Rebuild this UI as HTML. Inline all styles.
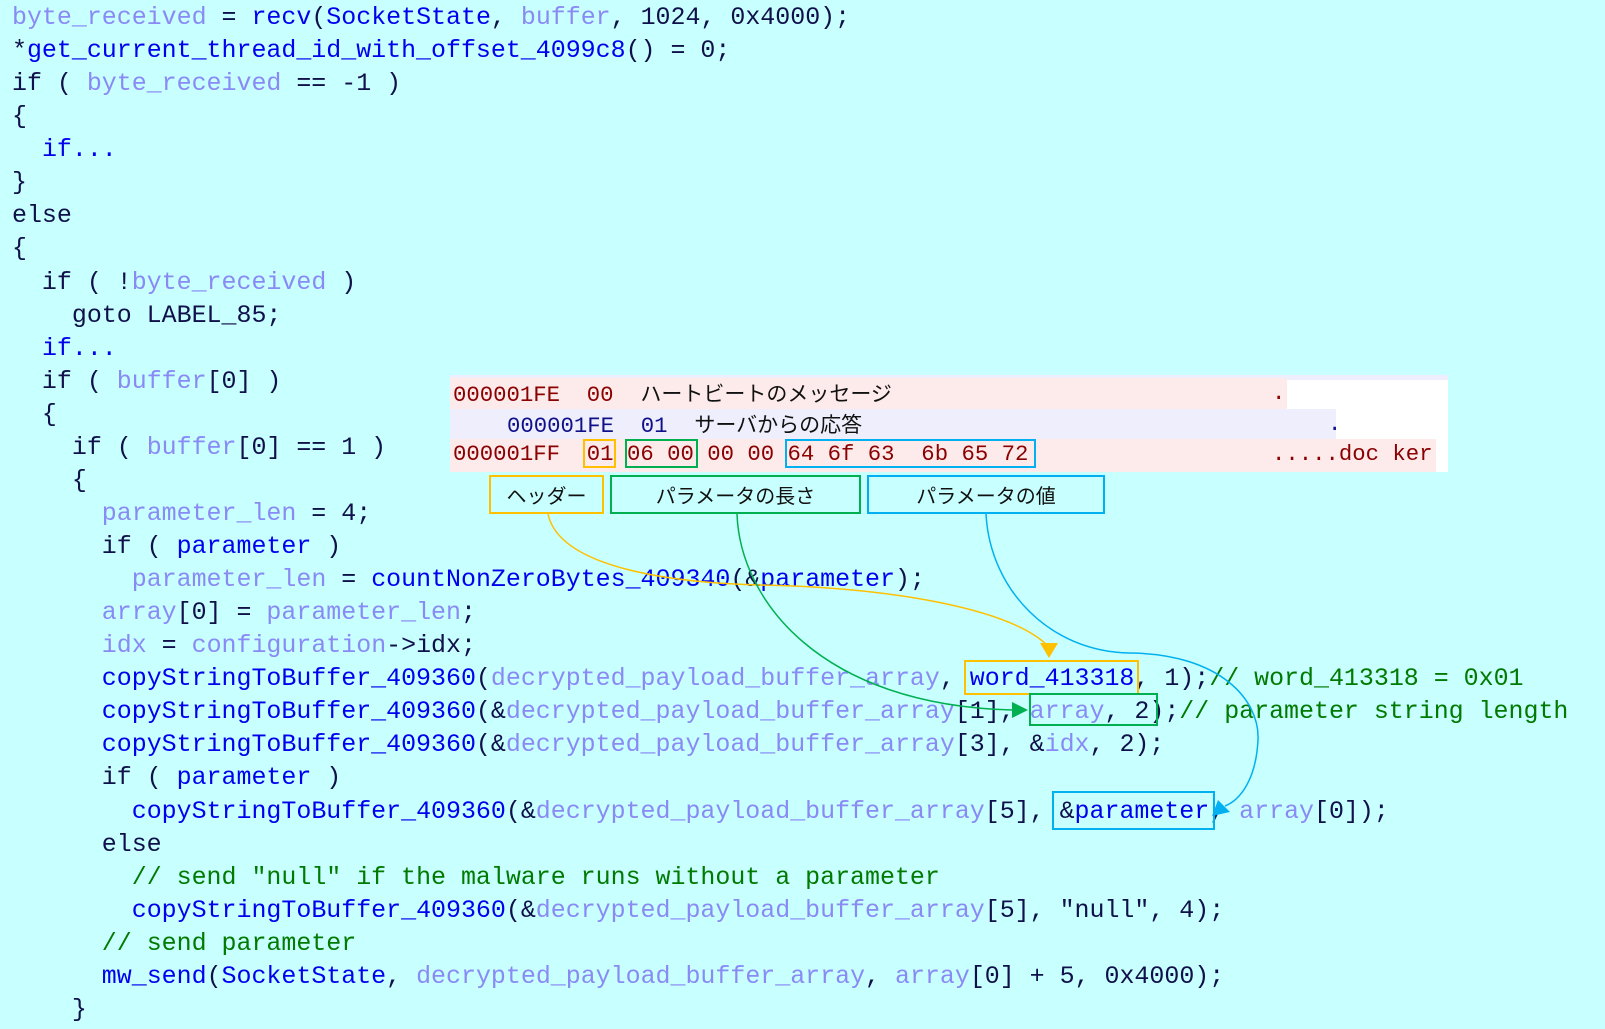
<!DOCTYPE html>
<html><head><meta charset="utf-8"><style>
html,body{margin:0;padding:0}
body{width:1605px;height:1029px;background:#c8ffff;position:relative;overflow:hidden}
pre.code{position:absolute;left:12px;top:2px;margin:0;font-family:"Liberation Mono",monospace;font-size:24.95px;line-height:33.07px;color:#10104a;white-space:pre}
.b{color:#0000ee}.v{color:#8a8af5}.g{color:#007a00}
.hex{position:absolute;left:450px;top:375px;width:998px;height:97px;background:#fff}
.row{position:absolute;height:31px;font-family:"Liberation Mono","Noto Sans CJK JP",monospace;font-size:22.3px;line-height:31px;white-space:pre}
.jp{font-family:"Noto Sans CJK JP",sans-serif;color:#111;font-size:21px}
.bx{position:absolute;box-sizing:border-box;border:2px solid}
.lbl{position:absolute;box-sizing:border-box;border:2px solid;top:475px;height:39px;background:#c8ffff;font-family:"Noto Sans CJK JP",sans-serif;font-size:20px;color:#111;text-align:center;line-height:35px}
svg{position:absolute;left:0;top:0}
</style></head><body>
<pre class="code"><span class="v">byte_received</span> = <span class="b">recv</span>(<span class="b">SocketState</span>, <span class="v">buffer</span>, 1024, 0x4000);
*<span class="b">get_current_thread_id_with_offset_4099c8</span>() = 0;
if ( <span class="v">byte_received</span> == -1 )
{
  <span class="b">if...</span>
}
else
{
  if ( !<span class="v">byte_received</span> )
    goto LABEL_85;
  <span class="b">if...</span>
  if ( <span class="v">buffer</span>[0] )
  {
    if ( <span class="v">buffer</span>[0] == 1 )
    {
      <span class="v">parameter_len</span> = 4;
      if ( <span class="b">parameter</span> )
        <span class="v">parameter_len</span> = <span class="b">countNonZeroBytes_409340</span>(&amp;<span class="b">parameter</span>);
      <span class="v">array</span>[0] = <span class="v">parameter_len</span>;
      <span class="v">idx</span> = <span class="v">configuration</span>-&gt;idx;
      <span class="b">copyStringToBuffer_409360</span>(<span class="v">decrypted_payload_buffer_array</span>, <span class="b">word_413318</span>, 1);<span class="g">// word_413318 = 0x01</span>
      <span class="b">copyStringToBuffer_409360</span>(&amp;<span class="v">decrypted_payload_buffer_array</span>[1], <span class="v">array</span>, 2);<span class="g">// parameter string length</span>
      <span class="b">copyStringToBuffer_409360</span>(&amp;<span class="v">decrypted_payload_buffer_array</span>[3], &amp;<span class="v">idx</span>, 2);
      if ( <span class="b">parameter</span> )
        <span class="b">copyStringToBuffer_409360</span>(&amp;<span class="v">decrypted_payload_buffer_array</span>[5], &amp;<span class="b">parameter</span>, <span class="v">array</span>[0]);
      else
        <span class="g">// send "null" if the malware runs without a parameter</span>
        <span class="b">copyStringToBuffer_409360</span>(&amp;<span class="v">decrypted_payload_buffer_array</span>[5], "null", 4);
      <span class="g">// send parameter</span>
      <span class="b">mw_send</span>(<span class="b">SocketState</span>, <span class="v">decrypted_payload_buffer_array</span>, <span class="v">array</span>[0] + 5, 0x4000);
    }</pre>

<div class="hex">
  <div style="position:absolute;left:0;top:0;width:998px;height:5px;background:#eeeefc"></div>
  <div class="row" style="left:0;top:3px;width:834px;background:#fdeaea;color:#8b0000;padding-left:3px">000001FE  00  <span class="jp">ハートビートのメッセージ</span></div>
  <div class="row" style="left:822px;top:3px;color:#8b0000">.</div>
  <div class="row" style="left:0;top:34px;width:886px;background:#eeeefc;color:#10108a;padding-left:57px;box-sizing:border-box">000001FE  01  <span class="jp">サーバからの応答</span></div>
  <div class="row" style="left:878px;top:34px;color:#10108a">.</div>
  <div class="row" style="left:0;top:64px;width:983px;height:33px;background:#fdeaea;color:#8b0000;padding-left:3px">000001FF  01 06 00 00 00 64 6f 63  6b 65 72</div>
  <div class="row" style="left:822px;top:64px;color:#8b0000">.....doc ker</div>
</div>
<div class="bx" style="left:583px;top:439px;width:33px;height:29px;border-color:#ffc000"></div>
<div class="bx" style="left:625px;top:439px;width:73px;height:29px;border-color:#00b050"></div>
<div class="bx" style="left:785px;top:439px;width:251px;height:29px;border-color:#00b0f0"></div>

<div class="lbl" style="left:489px;width:115px;border-color:#ffc000">ヘッダー</div>
<div class="lbl" style="left:610px;width:251px;border-color:#00b050">パラメータの長さ</div>
<div class="lbl" style="left:867px;width:238px;border-color:#00b0f0">パラメータの値</div>

<div class="bx" style="left:964px;top:660px;width:175px;height:35px;border-color:#ffc000"></div>
<div class="bx" style="left:1029px;top:693px;width:129px;height:33px;border-color:#00b050"></div>
<div class="bx" style="left:1052px;top:791px;width:163px;height:39px;border-color:#00b0f0"></div>

<svg width="1605" height="1029" viewBox="0 0 1605 1029">
  <path d="M548,514 C560,570 680,583 760,585 C900,588 1010,610 1047,645" fill="none" stroke="#ffc000" stroke-width="1.5"/>
  <polygon points="1040,643 1058,643 1049,658" fill="#ffc000"/>
  <path d="M737,514 C740,600 820,705 1012,710" fill="none" stroke="#00b050" stroke-width="1.5"/>
  <polygon points="1012,702 1028,710 1012,718" fill="#00b050"/>
  <path d="M986,514 C990,590 1050,652 1130,653 C1220,654 1260,700 1258,740 C1256,780 1240,800 1225,806" fill="none" stroke="#00b0f0" stroke-width="1.5"/>
  <polygon points="1218,800 1230,812 1212,816" fill="#00b0f0"/>
</svg>
</body></html>
